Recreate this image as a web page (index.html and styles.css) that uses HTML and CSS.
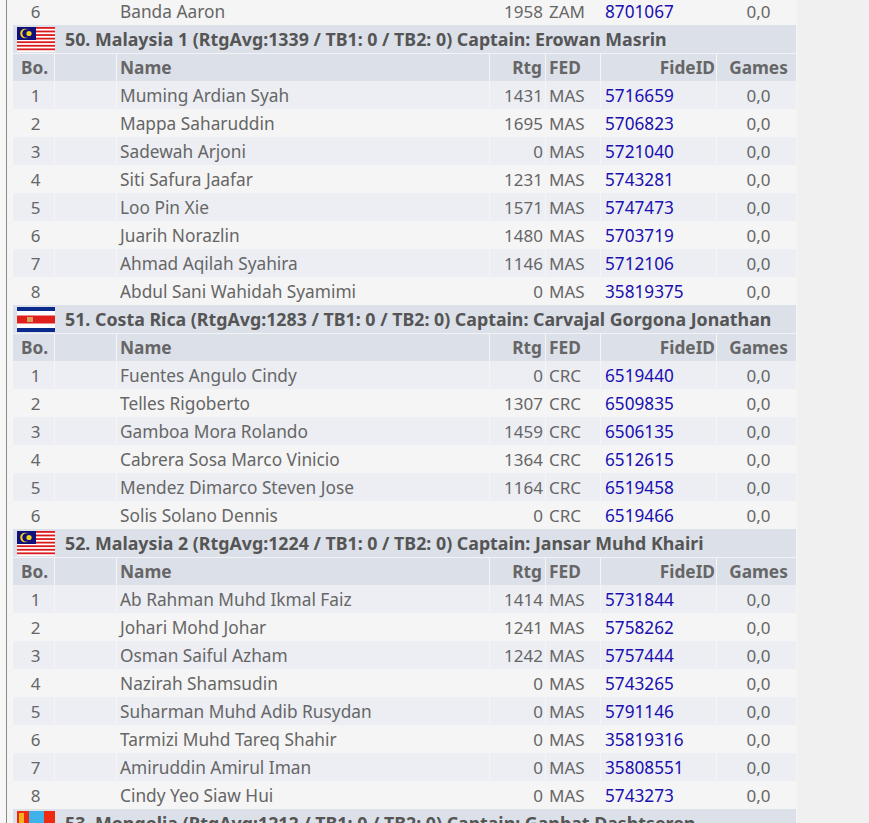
FILE: index.html
```html
<!DOCTYPE html>
<html lang="en">
<head>
<meta charset="utf-8">
<title>Team composition</title>
<link rel="stylesheet" href="styles.css">
</head>
<body>
<main class="panel">
<table class="teams">
<colgroup><col class="c-bo"><col class="c-blank"><col class="c-name"><col class="c-rtg"><col class="c-fed"><col class="c-id"><col class="c-games"></colgroup>
<tbody>
<tr class="even"><td class="ctr">6</td><td></td><td class="name">Banda Aaron</td><td class="num">1958</td><td>ZAM</td><td class="id"><a href="#">8701067</a></td><td class="ctr">0,0</td></tr>
<tr class="team"><td colspan="7"><svg class="flag" viewBox="0 0 38 25"><use href="#my"/></svg>50. Malaysia 1 (RtgAvg:1339 / TB1: 0 / TB2: 0) Captain: Erowan Masrin</td></tr>
<tr class="head"><th class="ctr">Bo.</th><th></th><th class="left">Name</th><th class="num">Rtg</th><th class="left">FED</th><th class="num">FideID</th><th class="ctr">Games</th></tr>
<tr class="odd"><td class="ctr">1</td><td></td><td class="name">Muming Ardian Syah</td><td class="num">1431</td><td>MAS</td><td class="id"><a href="#">5716659</a></td><td class="ctr">0,0</td></tr>
<tr class="even"><td class="ctr">2</td><td></td><td class="name">Mappa Saharuddin</td><td class="num">1695</td><td>MAS</td><td class="id"><a href="#">5706823</a></td><td class="ctr">0,0</td></tr>
<tr class="odd"><td class="ctr">3</td><td></td><td class="name">Sadewah Arjoni</td><td class="num">0</td><td>MAS</td><td class="id"><a href="#">5721040</a></td><td class="ctr">0,0</td></tr>
<tr class="even"><td class="ctr">4</td><td></td><td class="name">Siti Safura Jaafar</td><td class="num">1231</td><td>MAS</td><td class="id"><a href="#">5743281</a></td><td class="ctr">0,0</td></tr>
<tr class="odd"><td class="ctr">5</td><td></td><td class="name">Loo Pin Xie</td><td class="num">1571</td><td>MAS</td><td class="id"><a href="#">5747473</a></td><td class="ctr">0,0</td></tr>
<tr class="even"><td class="ctr">6</td><td></td><td class="name">Juarih Norazlin</td><td class="num">1480</td><td>MAS</td><td class="id"><a href="#">5703719</a></td><td class="ctr">0,0</td></tr>
<tr class="odd"><td class="ctr">7</td><td></td><td class="name">Ahmad Aqilah Syahira</td><td class="num">1146</td><td>MAS</td><td class="id"><a href="#">5712106</a></td><td class="ctr">0,0</td></tr>
<tr class="even"><td class="ctr">8</td><td></td><td class="name">Abdul Sani Wahidah Syamimi</td><td class="num">0</td><td>MAS</td><td class="id"><a href="#">35819375</a></td><td class="ctr">0,0</td></tr>
<tr class="team"><td colspan="7"><svg class="flag" viewBox="0 0 38 25"><use href="#cr"/></svg>51. Costa Rica (RtgAvg:1283 / TB1: 0 / TB2: 0) Captain: Carvajal Gorgona Jonathan</td></tr>
<tr class="head"><th class="ctr">Bo.</th><th></th><th class="left">Name</th><th class="num">Rtg</th><th class="left">FED</th><th class="num">FideID</th><th class="ctr">Games</th></tr>
<tr class="odd"><td class="ctr">1</td><td></td><td class="name">Fuentes Angulo Cindy</td><td class="num">0</td><td>CRC</td><td class="id"><a href="#">6519440</a></td><td class="ctr">0,0</td></tr>
<tr class="even"><td class="ctr">2</td><td></td><td class="name">Telles Rigoberto</td><td class="num">1307</td><td>CRC</td><td class="id"><a href="#">6509835</a></td><td class="ctr">0,0</td></tr>
<tr class="odd"><td class="ctr">3</td><td></td><td class="name">Gamboa Mora Rolando</td><td class="num">1459</td><td>CRC</td><td class="id"><a href="#">6506135</a></td><td class="ctr">0,0</td></tr>
<tr class="even"><td class="ctr">4</td><td></td><td class="name">Cabrera Sosa Marco Vinicio</td><td class="num">1364</td><td>CRC</td><td class="id"><a href="#">6512615</a></td><td class="ctr">0,0</td></tr>
<tr class="odd"><td class="ctr">5</td><td></td><td class="name">Mendez Dimarco Steven Jose</td><td class="num">1164</td><td>CRC</td><td class="id"><a href="#">6519458</a></td><td class="ctr">0,0</td></tr>
<tr class="even"><td class="ctr">6</td><td></td><td class="name">Solis Solano Dennis</td><td class="num">0</td><td>CRC</td><td class="id"><a href="#">6519466</a></td><td class="ctr">0,0</td></tr>
<tr class="team"><td colspan="7"><svg class="flag" viewBox="0 0 38 25"><use href="#my"/></svg>52. Malaysia 2 (RtgAvg:1224 / TB1: 0 / TB2: 0) Captain: Jansar Muhd Khairi</td></tr>
<tr class="head"><th class="ctr">Bo.</th><th></th><th class="left">Name</th><th class="num">Rtg</th><th class="left">FED</th><th class="num">FideID</th><th class="ctr">Games</th></tr>
<tr class="odd"><td class="ctr">1</td><td></td><td class="name">Ab Rahman Muhd Ikmal Faiz</td><td class="num">1414</td><td>MAS</td><td class="id"><a href="#">5731844</a></td><td class="ctr">0,0</td></tr>
<tr class="even"><td class="ctr">2</td><td></td><td class="name">Johari Mohd Johar</td><td class="num">1241</td><td>MAS</td><td class="id"><a href="#">5758262</a></td><td class="ctr">0,0</td></tr>
<tr class="odd"><td class="ctr">3</td><td></td><td class="name">Osman Saiful Azham</td><td class="num">1242</td><td>MAS</td><td class="id"><a href="#">5757444</a></td><td class="ctr">0,0</td></tr>
<tr class="even"><td class="ctr">4</td><td></td><td class="name">Nazirah Shamsudin</td><td class="num">0</td><td>MAS</td><td class="id"><a href="#">5743265</a></td><td class="ctr">0,0</td></tr>
<tr class="odd"><td class="ctr">5</td><td></td><td class="name">Suharman Muhd Adib Rusydan</td><td class="num">0</td><td>MAS</td><td class="id"><a href="#">5791146</a></td><td class="ctr">0,0</td></tr>
<tr class="even"><td class="ctr">6</td><td></td><td class="name">Tarmizi Muhd Tareq Shahir</td><td class="num">0</td><td>MAS</td><td class="id"><a href="#">35819316</a></td><td class="ctr">0,0</td></tr>
<tr class="odd"><td class="ctr">7</td><td></td><td class="name">Amiruddin Amirul Iman</td><td class="num">0</td><td>MAS</td><td class="id"><a href="#">35808551</a></td><td class="ctr">0,0</td></tr>
<tr class="even"><td class="ctr">8</td><td></td><td class="name">Cindy Yeo Siaw Hui</td><td class="num">0</td><td>MAS</td><td class="id"><a href="#">5743273</a></td><td class="ctr">0,0</td></tr>
<tr class="team"><td colspan="7"><svg class="flag" viewBox="0 0 38 25"><use href="#mn"/></svg>53. Mongolia (RtgAvg:1212 / TB1: 0 / TB2: 0) Captain: Ganbat Dashtseren</td></tr>
</tbody>
</table>
</main>
<svg class="defs" aria-hidden="true">
<defs>
<g id="my">
<rect width="38" height="25" fill="#fff"/>
<rect y="0" width="38" height="1.800" fill="#d9191c"/><rect y="3.570" width="38" height="1.800" fill="#d9191c"/><rect y="7.140" width="38" height="1.800" fill="#d9191c"/><rect y="10.710" width="38" height="1.800" fill="#d9191c"/><rect y="14.290" width="38" height="1.800" fill="#d9191c"/><rect y="17.860" width="38" height="1.800" fill="#d9191c"/><rect y="21.430" width="38" height="1.800" fill="#d9191c"/>
<rect width="19" height="13" fill="#10107a"/>
<circle cx="8" cy="6.500" r="4.800" fill="#f4d21c"/><circle cx="9.500" cy="6.500" r="4.200" fill="#10107a"/>
<circle cx="12" cy="6.500" r="2.600" fill="#f4d21c"/>
</g>
<g id="cr">
<rect width="38" height="25" fill="#fff"/>
<rect width="38" height="4" fill="#0a2a8c"/><rect y="21" width="38" height="4" fill="#0a2a8c"/>
<rect y="8.500" width="38" height="8" fill="#e0201c"/>
<rect x="10" y="10" width="6" height="5" fill="#d9a35a"/>
</g>
<g id="mn">
<rect width="38" height="25" fill="#ee2a10"/>
<rect x="12" width="15" height="25" fill="#3fb2ea"/>
<rect x="2" y="2" width="5" height="20" fill="#f2b21c"/>
</g>
</defs>
</svg>
</body>
</html>
```
FILE: styles.css
```css
html, body {
  margin: 0;
  height: 823px;
  overflow: hidden;
  background: linear-gradient(to right, #f7f7f7 6px, #f0f0f0 6px);
}
.panel {
  margin-left: 6px;
  width: 791px;
  height: 826px;
  margin-top: -3px;
  padding-left: 6px;
  box-sizing: border-box;
  border-left: 1px solid #8a8a8a;
  background: #f5f5f5;
}
.teams {
  width: 784px;
  table-layout: fixed;
  border-collapse: separate;
  border-spacing: 0;
  font-family: "Noto Sans", "Open Sans", sans-serif;
  font-size: 17px;
  color: #666;
}
.c-bo { width: 42px; }
.c-blank { width: 62px; }
.c-name { width: 373px; }
.c-rtg { width: 56px; }
.c-fed { width: 55px; }
.c-id { width: 116px; }
.c-games { width: 80px; }
.teams tr { height: 28px; }
.teams td, .teams th {
  padding: 2px 3px 0;
  height: 28px;
  box-sizing: border-box;
  white-space: nowrap;
  overflow: hidden;
  border-right: 1px solid #f5f5f5;
  line-height: 26px;
}
.teams .name { font-size: 17.3px; }
.teams .num { padding-right: 2px; }
.teams .ctr { padding-left: 5px; padding-right: 1px; }
.teams .id { padding-left: 4px; font-size: 17.2px; }
.teams a { color: #1a0fb0; text-decoration: none; }
.odd td { background: #eceef3; }
.even td { background: #f5f5f5; }
.teams .head th {
  background: #dce0e9;
  border-top: 1px solid #f2f3f6;
  color: #666;
  font-size: 17.3px;
  font-weight: 700;
  line-height: 25px;
  padding-top: 0;
}
.teams .head th.num:nth-child(4) { padding-right: 3px; }
.teams .head th.num:nth-child(6) { padding-right: 1px; }
.teams .head th.ctr:first-child { padding-left: 3px; }
.teams .team td {
  background: #dce0e9;
  color: #555;
  font-size: 17.8px;
  font-weight: 700;
  padding: 0 0 0 4px;
}
.flag {
  width: 38px;
  height: 25px;
  vertical-align: middle;
  margin-right: 10px;
  margin-top: -3px;
}
.ctr { text-align: center; }
.num { text-align: right; }
.left { text-align: left; }
.defs { width: 0; height: 0; position: absolute; }
```
